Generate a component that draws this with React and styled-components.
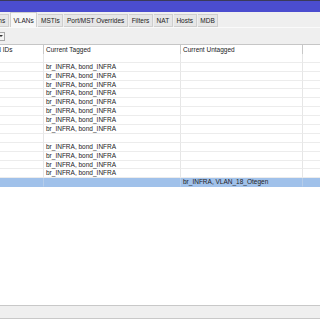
import React from "react";
import styled, { createGlobalStyle } from "styled-components";

const GlobalStyle = createGlobalStyle`
  html, body {
    margin: 0;
    padding: 0;
    background: #ffffff;
  }
  body {
    font-family: "Liberation Sans", Arial, sans-serif;
    font-size: 6.5px;
    color: #222;
  }
`;

const tabs = [
  "Port Extensions",
  "VLANs",
  "MSTIs",
  "Port/MST Overrides",
  "Filters",
  "NAT",
  "Hosts",
  "MDB",
];

const TAGGED = "br_INFRA, bond_INFRA";

const rows = [
  { tagged: "", untagged: "" },
  ...Array(8).fill({ tagged: TAGGED, untagged: "" }),
  { tagged: "", untagged: "" },
  ...Array(4).fill({ tagged: TAGGED, untagged: "" }),
  { tagged: "", untagged: "br_INFRA, VLAN_18_Otegen", selected: true },
];

function App() {
  return (
    <Window>
      <GlobalStyle />
      <TitleBar />
      <TabBar>
        <TabStrip>
          {tabs.map((t) => (
            <Tab key={t} $active={t === "VLANs"}>
              {t}
            </Tab>
          ))}
        </TabStrip>
      </TabBar>
      <Toolbar>
        <DropButton>
          <Arrow />
        </DropButton>
      </Toolbar>
      <Table>
        <Grid>
          <HeadCell>VLAN IDs</HeadCell>
          <HeadCell>Current Tagged</HeadCell>
          <HeadCell>Current Untagged</HeadCell>
          <HeadCell />
          {rows.map((r, i) => (
            <React.Fragment key={i}>
              <Cell $selected={r.selected} />
              <Cell $selected={r.selected}>{r.tagged}</Cell>
              <Cell $selected={r.selected}>{r.untagged}</Cell>
              <Cell $selected={r.selected} />
            </React.Fragment>
          ))}
        </Grid>
      </Table>
      <StatusBar />
    </Window>
  );
}

const Window = styled.div`
  width: 320px;
  height: 320px;
  display: flex;
  flex-direction: column;
  overflow: hidden;
  background: #fff;
`;

const TitleBar = styled.div`
  height: 11px;
  flex: none;
  border-top: 1px solid #3a3a5a;
  background: #4b4dcf;
`;

const TabBar = styled.div`
  height: 15px;
  flex: none;
  background: #efefef;
  border-bottom: 1px solid #fafafa;
  overflow: hidden;
  display: flex;
  align-items: flex-end;
`;

const TabStrip = styled.div`
  display: flex;
  margin-left: -43px;
  height: 100%;
  align-items: flex-end;
`;

const Tab = styled.div`
  box-sizing: border-box;
  height: ${(p) => (p.$active ? "15px" : "13px")};
  padding: 0 2.65px;
  margin-right: 1px;
  display: flex;
  align-items: center;
  white-space: nowrap;
  color: #222;
  background: ${(p) => (p.$active ? "#f7f7f7" : "#e6e6e6")};
  border: 1px solid #cfcfcf;
  border-left: ${(p) => (p.$active ? "1px solid #cfcfcf" : "none")};
  border-bottom: ${(p) => (p.$active ? "none" : "1px solid #cfcfcf")};
`;

const Toolbar = styled.div`
  height: 16px;
  flex: none;
  background: #efefef;
  display: flex;
  align-items: center;
  overflow: hidden;
`;

const DropButton = styled.div`
  box-sizing: border-box;
  width: 12px;
  height: 9px;
  margin-left: -7px;
  border: 1px solid #a8a8a8;
  background: #f4f4f4;
  display: flex;
  align-items: center;
  justify-content: flex-end;
  padding-right: 1px;
`;

const Arrow = styled.div`
  width: 0;
  height: 0;
  border-left: 2px solid transparent;
  border-right: 2px solid transparent;
  border-top: 2px solid #333;
`;

const Table = styled.div`
  flex: 1;
  overflow: hidden;
  border-top: 1px solid #c6c6c6;
  background: #fff;
`;

const Grid = styled.div`
  display: grid;
  grid-template-columns: 62px 137px 122px 60px;
  grid-auto-rows: 8.9px;
  margin-left: -18px;
`;

const HeadCell = styled.div`
  box-sizing: border-box;
  height: 10px;
  padding: 0 2px;
  line-height: 9px;
  white-space: nowrap;
  overflow: hidden;
  color: #222;
  background: #fff;
  border-right: 1px solid #c8c8c8;
  border-bottom: 1px solid #e2e2e2;
`;

const Cell = styled.div`
  box-sizing: border-box;
  padding: 0 2px;
  line-height: 8px;
  white-space: nowrap;
  color: #222;
  background: ${(p) => (p.$selected ? "#a0c1ea" : "#fff")};
  border-right: 1px solid ${(p) => (p.$selected ? "#b6cdea" : "#e6e6e6")};
  border-bottom: 1px solid ${(p) => (p.$selected ? "#a0c1ea" : "#ececec")};
`;

const StatusBar = styled.div`
  height: 12px;
  flex: none;
  margin-bottom: 1px;
  background: #efefef;
  border-top: 1px solid #c8c8c8;
  border-bottom: 1px solid #c8c8c8;
`;

export default App;
